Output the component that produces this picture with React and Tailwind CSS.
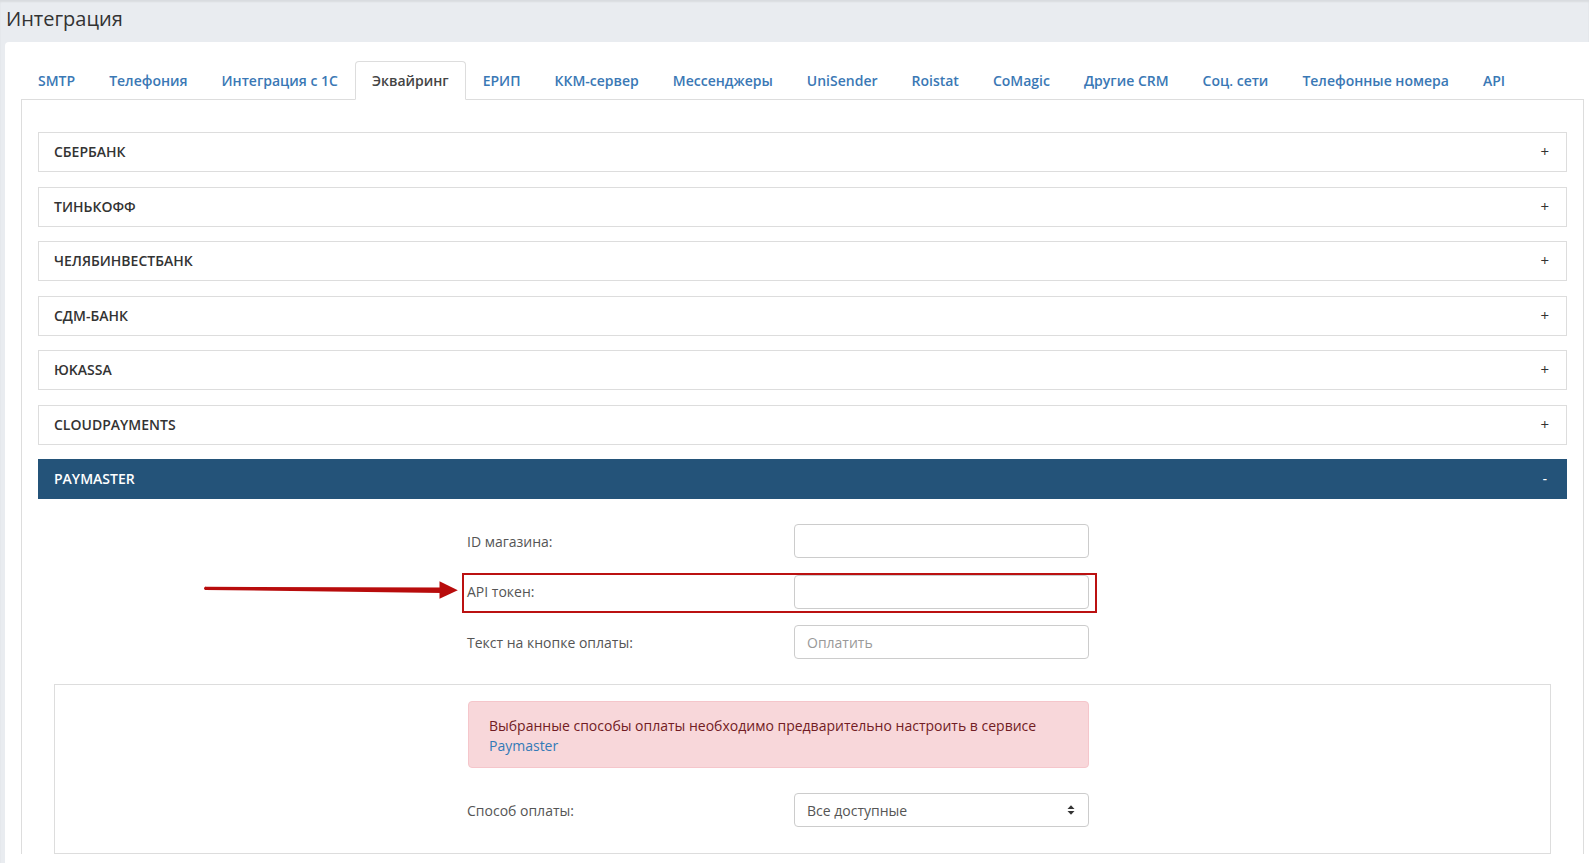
import React from 'react';

const tabs = [
  'SMTP',
  'Телефония',
  'Интеграция с 1С',
  'Эквайринг',
  'ЕРИП',
  'ККМ-сервер',
  'Мессенджеры',
  'UniSender',
  'Roistat',
  'CoMagic',
  'Другие CRM',
  'Соц. сети',
  'Телефонные номера',
  'API',
];

const banks = ['Сбербанк', 'Тинькофф', 'Челябинвестбанк', 'СДМ-Банк', 'ЮKassa', 'CloudPayments'];

function SortCaret() {
  return (
    <svg width="8" height="12" viewBox="0 0 8 12">
      <path d="M0.5 5 L4 1.2 L7.5 5 Z" fill="#333" />
      <path d="M0.5 7 L4 10.8 L7.5 7 Z" fill="#333" />
    </svg>
  );
}

function FieldRow({ label, placeholder, children }) {
  return (
    <div className="relative flex items-center h-[34px]">
      <label className="w-[327px] text-[14px] text-[#555]">{label}</label>
      <input
        className="w-[295px] h-[34px] border border-[#ccc] rounded-[4px] px-[12px] text-[14px] text-[#555] placeholder:text-[#999] outline-none"
        placeholder={placeholder}
      />
      {children}
    </div>
  );
}

export default function App() {
  return (
    <div className="h-[863px] overflow-hidden bg-[#e9ecf0] font-['Open_Sans',sans-serif] shadow-[inset_0_2px_2px_rgba(0,0,0,0.07)]">
      <div className="h-[42px] px-[6px] pt-[5px] text-[20px] leading-[28px] text-[#333]">Интеграция</div>

      <div className="ml-[5px] bg-white rounded-tl-[4px] pt-[19px] pl-[16px] pr-[5px] h-[900px]">
        {/* tab bar */}
        <div className="flex border-b border-[#ddd]">
          {tabs.map((tab) => {
            const active = tab === 'Эквайринг';
            return (
              <div
                key={tab}
                className={
                  active
                    ? 'h-[39px] -mb-px px-[16px] flex items-center border border-[#ddd] border-b-white rounded-t-[4px] bg-white text-[14px] font-semibold text-[#444]'
                    : 'h-[38px] px-[17px] flex items-center text-[14px] font-semibold text-[#3a78b5]'
                }
              >
                {tab}
              </div>
            );
          })}
        </div>

        {/* tab content */}
        <div className="border-x border-[#ddd] pt-[32px] px-[16px]">
          {banks.map((bank) => (
            <div
              key={bank}
              className="h-[40px] mb-[14.5px] border border-[#ddd] flex items-center justify-between pl-[15px] pr-[17px] pb-[1px] text-[14px] font-semibold text-[#333] uppercase"
            >
              <span>{bank}</span>
              <span className="text-[15px] font-normal">+</span>
            </div>
          ))}

          <div className="h-[40px] bg-[#245379] flex items-center justify-between pl-[16px] pr-[20px] pb-[1px] text-[14px] font-semibold text-white uppercase">
            <span>Paymaster</span>
            <span className="text-[13px]">-</span>
          </div>

          <div className="px-[16px] pt-[25px]">
            <div className="ml-[413px] flex flex-col gap-[16.5px]">
              <FieldRow label="ID магазина:" />
              <FieldRow label="API токен:">
                <div className="absolute -left-[5px] -top-[2px] w-[635px] h-[40px] border-2 border-[#bb1111] pointer-events-none" />
                <svg className="absolute -left-[263px] top-[5px]" width="254" height="20" viewBox="0 0 254 20">
                  <path d="M1 6.8 L238 7.4 L238 13 L1 9.9 Z" fill="#b80c0c" />
                  <circle cx="1.6" cy="8.35" r="1.6" fill="#b80c0c" />
                  <path d="M235.5 1.2 L253.8 10.2 L235.5 18.8 Z" fill="#b80c0c" />
                </svg>
              </FieldRow>
              <FieldRow label="Текст на кнопке оплаты:" placeholder="Оплатить" />
            </div>

            <div className="mt-[25px] border border-[#ddd] pt-[16px] pb-[26px] pl-[413px]">
              <div className="w-[621px] h-[67px] bg-[#f8d7da] border border-[#f5c6cb] rounded-[4px] px-[20px] pt-[14px] text-[14px] leading-[20px] text-[#721c24]">
                Выбранные способы оплаты необходимо предварительно настроить в сервисе
                <br />
                <span className="text-[#337ab7]">Paymaster</span>
              </div>

              <div className="mt-[25px] -ml-px flex items-center h-[34px]">
                <span className="w-[327px] text-[14px] text-[#555]">Способ оплаты:</span>
                <div className="w-[295px] h-[34px] border border-[#ccc] rounded-[4px] pl-[12px] pr-[13px] flex items-center justify-between text-[14px] text-[#555]">
                  <span>Все доступные</span>
                  <SortCaret />
                </div>
              </div>
            </div>
          </div>
        </div>
      </div>
    </div>
  );
}
